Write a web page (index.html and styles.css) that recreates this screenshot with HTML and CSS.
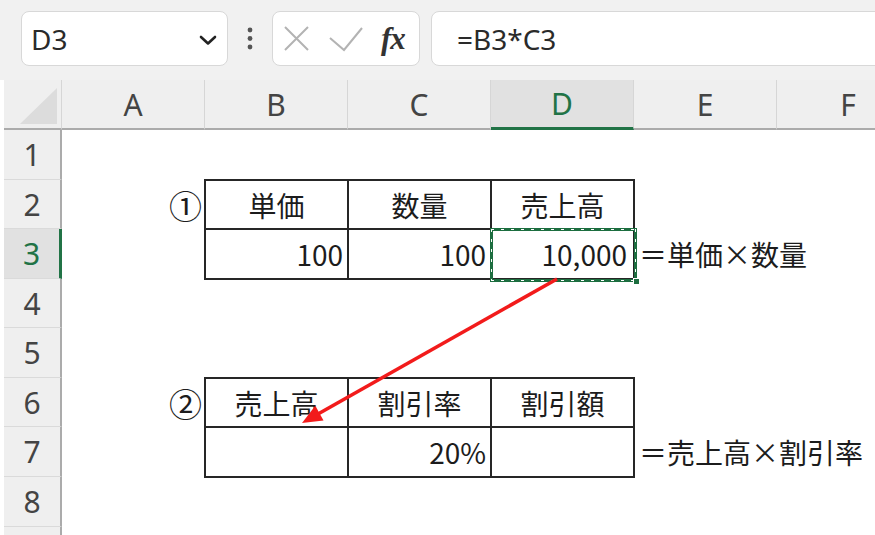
FILE: index.html
```html
<!DOCTYPE html>
<html lang="ja">
<head>
<meta charset="utf-8">
<title>Excel</title>
<link rel="stylesheet" href="styles.css">
</head>
<body>
<div class="app">
  <div class="toolbar">
    <div class="namebox">
      <span class="ref">D3</span>
      <svg class="chev" width="18" height="12" viewBox="0 0 18 12"><polyline points="2,3 9,9.5 16,3" fill="none" stroke="#222" stroke-width="2.6" stroke-linecap="round" stroke-linejoin="round"/></svg>
    </div>
    <div class="sep">
      <svg width="8" height="26" viewBox="0 0 8 26"><circle cx="4" cy="4" r="2.4" fill="#555"/><circle cx="4" cy="12.5" r="2.4" fill="#555"/><circle cx="4" cy="21" r="2.4" fill="#555"/></svg>
    </div>
    <div class="fxbox">
      <svg class="fxicons" width="96" height="55" viewBox="0 0 96 55">
        <path d="M13 16 L36 39 M36 16 L13 39" stroke="#b3b3b3" stroke-width="2" fill="none"/>
        <polyline points="58,27 72,39 90,17" stroke="#b3b3b3" stroke-width="2" fill="none"/>
      </svg>
      <span class="fx">fx</span>
    </div>
    <div class="formula">=B3*C3</div>
  </div>

  <div class="sheet">
    <div class="corner"><svg width="56" height="48" viewBox="0 0 56 48"><polygon points="16,44 53,44 53,8" fill="#dcdcdc"/></svg></div>
    <div class="ch">A</div><div class="ch">B</div><div class="ch">C</div><div class="ch sel">D</div><div class="ch">E</div><div class="ch">F</div>

    <div class="rh">1</div><div class="c"></div><div class="c"></div><div class="c"></div><div class="c"></div><div class="c"></div><div class="c"></div>

    <div class="rh">2</div><div class="c r num">①</div><div class="c m b">単価</div><div class="c m b">数量</div><div class="c m b">売上高</div><div class="c"></div><div class="c"></div>

    <div class="rh sel">3</div><div class="c"></div><div class="c r b">100</div><div class="c r b">100</div><div class="c r b active">10,000<div class="selection"></div></div><div class="c note">＝単価×数量</div><div class="c"></div>

    <div class="rh">4</div><div class="c"></div><div class="c"></div><div class="c"></div><div class="c"></div><div class="c"></div><div class="c"></div>

    <div class="rh">5</div><div class="c"></div><div class="c"></div><div class="c"></div><div class="c"></div><div class="c"></div><div class="c"></div>

    <div class="rh">6</div><div class="c r num">②</div><div class="c m b">売上高</div><div class="c m b">割引率</div><div class="c m b">割引額</div><div class="c"></div><div class="c"></div>

    <div class="rh">7</div><div class="c"></div><div class="c b"></div><div class="c r b">20%</div><div class="c b"></div><div class="c note">＝売上高×割引率</div><div class="c"></div>

    <div class="rh">8</div><div class="c"></div><div class="c"></div><div class="c"></div><div class="c"></div><div class="c"></div><div class="c"></div>

    <div class="rh"></div><div class="c"></div><div class="c"></div><div class="c"></div><div class="c"></div><div class="c"></div><div class="c"></div>
  </div>

  <svg class="arrow" width="875" height="535" viewBox="0 0 875 535">
    <line x1="557" y1="279" x2="318" y2="414" stroke="#f21b1b" stroke-width="3.6"/>
    <polygon points="302,423 323.5,420.5 315.3,405.8" fill="#f21b1b"/>
  </svg>
</div>
</body>
</html>
```

FILE: styles.css
```css
html, body {
  margin: 0;
  padding: 0;
  background: #ffffff;
}

.app {
  position: relative;
  width: 875px;
  height: 535px;
  overflow: hidden;
  background: #ffffff;
  font-family: "Noto Sans", "Noto Sans CJK JP", sans-serif;
}

/* ---------- formula bar ---------- */
.toolbar {
  height: 80px;
  box-sizing: border-box;
  padding: 11px 0 0 21px;
  background: #f1f1f1;
  display: flex;
  align-items: flex-start;
}

.namebox {
  width: 207px;
  height: 55px;
  box-sizing: border-box;
  background: #ffffff;
  border: 1px solid #d8d8d8;
  border-radius: 8px;
  display: flex;
  align-items: center;
  padding: 0 9px 0 9px;
}

.ref {
  flex: 1;
  font-size: 28px;
  color: #2a2a2a;
  line-height: 1;
}

.chev {
  margin-right: 1px;
  margin-top: 2px;
}

.sep {
  width: 44px;
  height: 55px;
  display: flex;
  align-items: center;
  justify-content: center;
}

.fxbox {
  width: 148px;
  height: 55px;
  box-sizing: border-box;
  background: #ffffff;
  border: 1px solid #d8d8d8;
  border-radius: 8px;
  display: flex;
  align-items: center;
}

.fxicons {
  margin-left: -1px;
}

.fx {
  margin-left: 13px;
  font-family: "Liberation Serif", "DejaVu Serif", serif;
  font-style: italic;
  font-weight: bold;
  font-size: 31px;
  color: #333333;
  letter-spacing: -1px;
  line-height: 1;
}

.formula {
  flex: 1;
  height: 55px;
  margin-left: 11px;
  margin-right: -20px;
  box-sizing: border-box;
  background: #ffffff;
  border: 1px solid #d8d8d8;
  border-radius: 8px;
  display: flex;
  align-items: center;
  padding-left: 25px;
  font-size: 28px;
  color: #2a2a2a;
}

/* ---------- sheet ---------- */
.sheet {
  padding-left: 4px;
  display: grid;
  grid-template-columns: 58px repeat(6, 143px);
  grid-template-rows: 50px 50px 49px 50px 49px 50px 49px 50px 50px 50px;
  background: #ffffff;
}

.corner {
  background: #efefef;
  border-bottom: 2px solid #ababab;
  border-right: 1px solid #d6d6d6;
  box-sizing: border-box;
  display: flex;
  align-items: flex-start;
}

.ch {
  background: #efefef;
  border-right: 1px solid #d6d6d6;
  border-bottom: 2px solid #ababab;
  box-sizing: border-box;
  display: flex;
  align-items: center;
  justify-content: center;
  font-size: 30px;
  color: #444444;
}

.ch.sel {
  background: #e1e1e1;
  color: #217346;
  border-bottom: 3px solid #217346;
}

.rh {
  background: #efefef;
  border-right: 2px solid #ababab;
  border-bottom: 1px solid #dadada;
  box-sizing: border-box;
  display: flex;
  align-items: center;
  justify-content: center;
  font-size: 30px;
  color: #444444;
}

.rh.sel {
  background: #e1e1e1;
  color: #217346;
  border-right: 3px solid #217346;
}

.c {
  display: flex;
  align-items: center;
  padding: 0 5px;
  min-width: 0;
  white-space: nowrap;
  font-family: "Noto Sans CJK JP", sans-serif;
  font-size: 28px;
  color: #1c1c1c;
}

.c.r {
  justify-content: flex-end;
}

.c.m {
  justify-content: center;
}

.c.num {
  font-size: 33px;
  padding-right: 3px;
}

.c.b {
  box-shadow: 0 0 0 1px #262626, inset 0 0 0 1px #262626;
}

.c.note {
  overflow: visible;
  padding-left: 5px;
}

.c.active {
  position: relative;
  padding-right: 7px;
}

/* selected cell D3 with marching ants (overlay on the cell) */
.selection {
  position: absolute;
  top: -1px;
  left: -1px;
  right: -3px;
  bottom: -3px;
  border: 3px solid #1d6e40;
  z-index: 2;
}

.selection::after {
  content: "";
  position: absolute;
  top: -2px;
  left: -2px;
  right: -2px;
  bottom: -2px;
  background:
    repeating-linear-gradient(90deg, #ffffff 0 3px, transparent 3px 10px) top left / 100% 1px no-repeat,
    repeating-linear-gradient(90deg, #ffffff 0 3px, transparent 3px 10px) bottom left / 100% 1px no-repeat,
    repeating-linear-gradient(180deg, #ffffff 0 3px, transparent 3px 10px) top left / 1px 100% no-repeat,
    repeating-linear-gradient(180deg, #ffffff 0 3px, transparent 3px 10px) top right / 1px 100% no-repeat;
}

.selection::before {
  content: "";
  position: absolute;
  right: -6px;
  bottom: -6px;
  width: 5px;
  height: 5px;
  background: #1d6e40;
  border: 1px solid #ffffff;
  z-index: 1;
}

/* ---------- red arrow overlay ---------- */
.arrow {
  position: absolute;
  top: 0;
  left: 0;
  pointer-events: none;
  z-index: 3;
}
```
